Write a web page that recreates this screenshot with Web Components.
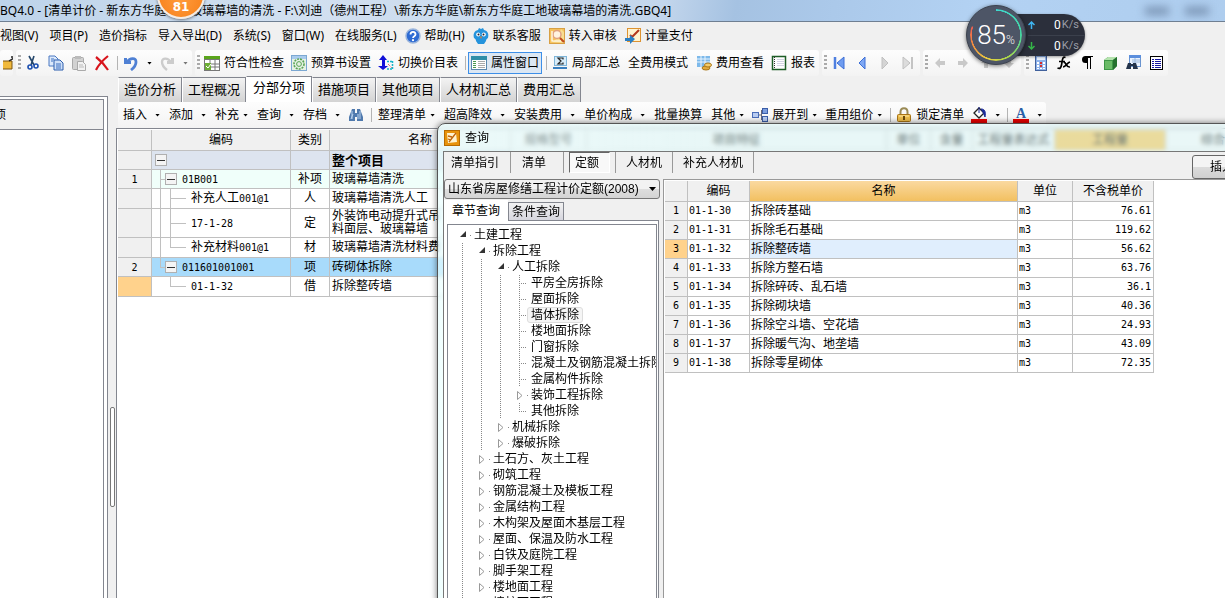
<!DOCTYPE html>
<html lang="zh-CN">
<head>
<meta charset="utf-8">
<title>清单计价</title>
<style>
html,body{margin:0;height:100%;overflow:hidden}
body{font:12px/16px "Noto Sans","Noto Sans CJK SC",sans-serif;color:#000;background:#f0f0f0;--mono:"DejaVu Sans Mono","Noto Sans CJK SC",monospace;--song:"Liberation Sans","Noto Sans CJK SC",sans-serif;--line:#c0c0c0;--edge:#83868f}
</style>
</head>
<body>
<cost-app></cost-app>
<script>
const BASE = `*{box-sizing:border-box}button{font:inherit;color:inherit;background:none;border:0;margin:0;padding:0;white-space:nowrap}`;
function define(name, css, html, init) {
  const t = document.createElement('template');
  t.innerHTML = `<style>${BASE}${css}</style>${html}`;
  customElements.define(name, class extends HTMLElement {
    constructor() {
      super();
      this.attachShadow({ mode: 'open' }).append(t.content.cloneNode(true));
    }
    connectedCallback() {
      if (this.ready) return;
      this.ready = true;
      if (init) init(this.shadowRoot, this);
    }
    fill(markup) {
      const c = document.createElement('template');
      c.innerHTML = markup;
      this.shadowRoot.append(c.content);
    }
  });
}

const ICONS = {
  open: `<path d="M-2 6h11v8h-11z" fill="#f0b93c" stroke="#7a5410"/><path d="M6 6l5-3M8 2h4v4" fill="none" stroke="#222" stroke-width="1.4"/>`,
  cut: `<path d="M4 1l5 9M9 1L6 10" stroke="#24466b" stroke-width="1.6" fill="none"/><circle cx="5" cy="12" r="2" fill="none" stroke="#1c4fb0" stroke-width="1.6"/><circle cx="11" cy="11" r="2" fill="none" stroke="#1c4fb0" stroke-width="1.6"/>`,
  copy: `<path d="M1 1h6l3 3v7H1z" fill="#dce9fb" stroke="#4a78c2"/><path d="M6 5h6l3 3v7H6z" fill="#cfe0f8" stroke="#2d5fae"/><path d="M8 9h5M8 11h5M8 13h5M3 4h3M3 6h2" stroke="#3a6fc0"/>`,
  paste: `<rect x="1.500" y="2.500" width="11" height="12" rx="1" fill="#d2d2d2" stroke="#aaa"/><rect x="4" y="1" width="6" height="3" fill="#bbb"/><path d="M6.500 6.500h5l3 3v6h-8z" fill="#f2f2f2" stroke="#aaa"/><path d="M8 10h4M8 12h5" stroke="#bbb"/>`,
  del: `<path d="M2 2c4 3 8 7 12 13M14 1C9 5 5 9 2 15" stroke="#d8141c" stroke-width="2.200" fill="none"/>`,
  undo: `<path d="M1 3h3v3h4v3H1z" fill="#4f80d4"/><path d="M4 7C7 3 13 2 13 7c0 3-1 5-5 8" stroke="#4f80d4" stroke-width="2.800" fill="none"/>`,
  redo: `<path d="M15 3h-3v3H8v3h7z" fill="#ccc"/><path d="M12 7C9 3 3 2 3 7c0 3 1 5 5 8" stroke="#ccc" stroke-width="2.400" fill="none"/>`,
  check: `<rect x="0" y="1" width="16" height="4" fill="#5aa51c"/><rect x=".5" y="4.500" width="15" height="11" fill="#fff" stroke="#777"/><path d="M6 5v10M11 5v10M1 9h15M1 12h15" stroke="#777"/><rect x="1" y="8" width="6" height="7" fill="#6cae34"/><path d="M2 11l2 2 3-4" stroke="#fff" fill="none"/>`,
  gear: `<rect x=".5" y=".5" width="15" height="15" fill="#e6f1e4" stroke="#7ca8d2"/><rect x="1" y="1" width="14" height="3" fill="#a9cbed"/><circle cx="8" cy="9" r="5" fill="none" stroke="#59a453" stroke-width="1.600" stroke-dasharray="2 1"/><circle cx="8" cy="9" r="2.400" fill="none" stroke="#59a453"/>`,
  swap: `<path d="M5 0L1 5h3v6H0l5 4 5-4H7V5h2z" fill="#1010d8"/><path d="M9 6.500h6M9 14h6M14.500 6v8" stroke="#17b5c9" stroke-width="1.500" stroke-dasharray="2 1"/><path d="M10 9l4 4" stroke="#e03030" stroke-dasharray="1 1"/>`,
  prop: `<rect x=".5" y="1.500" width="15" height="13" fill="#fff" stroke="#5b88ae"/><rect x="0" y="1" width="16" height="4" fill="#2f8ea8"/><path d="M2 6.500h3M2 8.500h3M2 10.500h3M2 12.500h3" stroke="#4b9a50"/><path d="M7 6.500h7M7 8.500h7M7 10.500h7M7 12.500h7" stroke="#aaa"/>`,
  sum: `<rect x="2.500" y="1.500" width="12" height="9" fill="#d7ecf9" stroke="#7fb5d8"/><path d="M11 4.500V3H6l3 3-3 3h5V7.500" stroke="#222" fill="none" stroke-width="1.200"/><path d="M1 13h14" stroke="#3a80c0" stroke-width="2"/>`,
  fee: `<rect x="1" y="1" width="13" height="11" fill="#7db9ea"/><path d="M1 4h13M1 7h13M5 1v11M9 1v11" stroke="#e9f5ff"/><ellipse cx="10" cy="13" rx="4" ry="2" fill="#e2aa3c" stroke="#a87618"/><ellipse cx="12" cy="10" rx="3.500" ry="2" fill="#f4cc6a" stroke="#a87618"/>`,
  report: `<rect x="1.500" y="1.500" width="13" height="13" fill="#fff" stroke="#1d5d26" stroke-width="1.500"/><path d="M3.500 2v12" stroke="#333" stroke-dasharray="1 1"/><path d="M6 4.500h7M6 6.500h7M6 8.500h7M6 10.500h7" stroke="#d4d4e4"/>`,
  first: `<path d="M4 2v12" stroke="#4e7fe0" stroke-width="2.500"/><path d="M13 2v12L6 8z" fill="#6f9cf0" stroke="#3d6fd6"/>`,
  prev: `<path d="M11 2v12L5 8z" fill="#7fa8f4" stroke="#3d6fd6"/>`,
  next: `<path d="M5 2v12l6-6z" fill="#d4d4d4" stroke="#c0c0c0"/>`,
  last: `<path d="M3 2v12l7-6z" fill="#dcdcdc" stroke="#c0c0c0"/><path d="M12 2v12" stroke="#c4c4c4" stroke-width="2"/>`,
  left: `<path d="M3 8l5-5v3h5v4H8v3z" fill="#c9c9c9"/>`,
  right: `<path d="M13 8L8 3v3H3v4h5v3z" fill="#c9c9c9"/>`,
  up: `<path d="M8 3l5 5h-3v5H6V8H3z" fill="#c9c9c9"/>`,
  down: `<path d="M8 13l5-5h-3V3H6v5H3z" fill="#c9c9c9"/>`,
  calc: `<rect x="2.500" y=".5" width="11" height="15" fill="#8fb2ea" stroke="#41619c"/><rect x="4" y="2" width="8" height="3" fill="#e8f2ff"/><path d="M4 7h2v2H4zM4 10h2v2H4zM4 13h2v1H4zM10 7h2v2h-2zM10 10h2v2h-2zM7 13h2v1H7zM10 13h2v1h-2z" fill="#fff"/><path d="M7 7h2v2H7zM7 10h2v2H7z" fill="#d42d2d"/>`,
  fx: `<path d="M9.500 2.500C6 1 6.500 6 5.500 10c-.5 3-1.500 4-4 3M3 6.500h6M7.500 7.500c3-1 2 5 6.500 4.500M14 7c-3 .5-4 5-7 5" stroke="#000" stroke-width="1.700" fill="none"/>`,
  pil: `<path d="M14 1H6.500a3.500 3.500 0 0 0 0 7H8v6h1V3h2v11h1V2h2z" fill="#000"/>`,
  cube: `<path d="M2 5l4-3h9v9l-4 4H2z" fill="#3d9646"/><path d="M2 5l4-3h9l-4 3z" fill="#b5e3ae"/><path d="M11 5l4-3v9l-4 4z" fill="#24702e"/><rect x="3" y="6" width="7" height="8" fill="#6abb67"/>`,
  find: `<rect x="4.500" y=".5" width="11" height="11" fill="#eaf3ff" stroke="#6a94cf"/><rect x="4" y="0" width="12" height="3" fill="#5c8fdd"/><path d="M7 5h8M7 7h8M10 3v8" stroke="#9ab8dd"/><path d="M3 8h3v6H1zM8 8h3l2 6H8zM5 9h4v2H5z" fill="#24344c"/>`,
  list: `<rect x="2.500" y="1.500" width="12" height="13" fill="#fff" stroke="#000"/><path d="M4 4.500h2M4 6.500h2M4 8.500h2M4 10.500h2M4 12.500h2M7 4.500h6M7 6.500h6M7 8.500h6M7 10.500h6M7 12.500h6" stroke="#1818a0"/>`,
  help: `<circle cx="8" cy="8" r="7" fill="#2e6bd3" stroke="#9bb5dc" stroke-width="1.500"/><path d="M5.500 6.500c0-3.500 5-3.500 5 0 0 1.800-2.500 1.800-2.500 3.500" stroke="#fff" stroke-width="1.800" fill="none"/><circle cx="8" cy="12.200" r="1.100" fill="#fff"/>`,
  bird: `<path d="M6 0l2 1 2-1 1 2c4 1 5 4 4 8-1 1-2 1-2 3l-2 3H5l-2-3c0-2-1-2-2-3C0 6 1 3 5 2z" fill="#2593dc"/><circle cx="5.200" cy="6.500" r="2" fill="#fff"/><circle cx="10.800" cy="6.500" r="2" fill="#fff"/><circle cx="5.500" cy="6.500" r="1" fill="#223"/><circle cx="10.500" cy="6.500" r="1" fill="#223"/><path d="M7 8.500h2L8 11z" fill="#ef7d20"/>`,
  audit: `<rect x=".5" y=".5" width="15" height="15" fill="#f6c25c" stroke="#d8a044"/><path d="M1 14c5 0 8-4 11-13l3 3v11z" fill="#f8dc90"/><circle cx="8" cy="6.500" r="4" fill="#fff3e0" stroke="#e0a080" stroke-width="1.500"/><path d="M11 10l4 4" stroke="#c0481b" stroke-width="2"/><path d="M3 3v10h9" stroke="#fff" stroke-width="1.200" fill="none"/>`,
  pay: `<rect x="2.500" y=".5" width="13" height="13" fill="#fff3cf" stroke="#dd9230"/><path d="M5 7l2 2 7-7M4 12l3-4" stroke="#b3371c" stroke-width="2" fill="none"/><path d="M0 10h5V7l5 4-5 5v-3H0z" fill="#2a7fc4"/>`,
  bino: `<path d="M4 2h3v4h2V2h3l3 8v4H9v-4H7v4H1v-4z" fill="#4f79ad"/><path d="M4 4v8M12 4v8M5 7l-2 5M10 7v5" stroke="#b9d2ee"/>`,
  expand: `<rect x="0.500" y="5.500" width="6" height="5" fill="#b9cdf2" stroke="#4b6eb8"/><path d="M7 8h3M9.500 3v10" stroke="#667" fill="none"/><rect x="10.500" y="1.500" width="5" height="5" fill="#7d9ede" stroke="#3b5ea8"/><rect x="10.500" y="9.500" width="5" height="5" fill="#b9cdf2" stroke="#3b5ea8"/>`,
  lock: `<path d="M4.500 8V5c0-5 7-5 7 0v3" stroke="#9a8a55" stroke-width="2" fill="none"/><rect x="1.500" y="7.500" width="13" height="7" rx="1" fill="#edbd4b" stroke="#a97416"/><path d="M3 9h10" stroke="#ffe9a4"/><rect x="7" y="9" width="2" height="4" fill="#6b4a0a"/>`,
  fill: `<path d="M3 6l5-5 5 5-5 5z" fill="#fff" stroke="#222" stroke-width="1.300"/><path d="M8 0v6M10 2c4 0 5 3 4 8l-2-5z" fill="#1c2b9a" stroke="#1c2b9a"/><rect x="0" y="12" width="16" height="4" fill="#e80000"/>`,
  font: `<text x="3" y="11" font-size="14" font-weight="700" font-family="Liberation Serif,serif" fill="#2a5fa8">A</text><rect x="0" y="12" width="16" height="4" fill="#e80000"/>`,
  app: `<rect x=".5" y=".5" width="15" height="15" fill="#e8930c" stroke="#b86b00"/><path d="M3 3h9l1 9-9 1z" fill="#fff3d0"/><path d="M4 6l4 1M4 9l3 1M5 12l7-9" stroke="#c0650a" stroke-width="1.300" fill="none"/>`
};

define('ui-icon', `:host{display:block;width:16px;height:16px;flex:none}svg{display:block;overflow:hidden}`, '', (r, el) => {
  el.fill(`<svg width="16" height="16" viewBox="0 0 16 16" aria-hidden="true">${ICONS[el.getAttribute('name')]}</svg>`);
});

define('tool-button', `
:host{display:block}
button{display:flex;align-items:center;gap:4px;height:22px;padding:0 2px;border:1px solid transparent}
:host([plain]) button{padding:0 3px}
:host([pressed]) button{border-color:#3d8fe8;background:#dce7f3}
i{display:none;width:5px;height:3px;background:#000;clip-path:polygon(0 0,100% 0,50% 100%)}
:host([arrow]) i{display:block}
:host([arrow=wide]) i{margin-left:4px}
:host([muted]) i{background:#777}`,
`<button type="button"><slot name="icon"></slot><slot></slot><i></i></button>`,
(r, el) => { const l = el.getAttribute('label'); if (l) r.querySelector('button').setAttribute('aria-label', l); });

define('tool-sep', `:host{display:block;width:1px;height:14px;background:#b4b4b4;margin:0 1px 0 3px;flex:none}`, '');

define('tool-group', `
:host{display:flex;align-items:center;gap:1px;height:26px;padding:0 1px;border-radius:3px;background:linear-gradient(#fdfdfd,#f3f3f3);flex:none}
:host([grip])::before{content:"";width:3px;height:16px;margin:0 0 0 1px;background:repeating-linear-gradient(#aaa 0 2px,transparent 2px 4px)}`, `<slot></slot>`);

define('title-bar', `
:host{display:flex;align-items:center;height:22px;border-bottom:1px solid #6f7f92;background:linear-gradient(100deg,#bdd3ea,#d2e0f0 25%,#c3d6ec 54%,#a5c2e2 60%,#abc9ea 68%,#b3d2f3 80%,#aecdee);overflow:hidden}
h1{flex:1;margin:0;font-size:12px;font-weight:400;white-space:nowrap}
i{width:24px;height:8px;margin-right:16px;background:#7a94b4;filter:blur(4px)}`,
`<h1>BQ4.0 - [清单计价 - 新东方华庭工地玻璃幕墙的清洗 - F:\\刘迪（德州工程）\\新东方华庭\\新东方华庭工地玻璃幕墙的清洗.GBQ4]</h1><i></i><i></i>`);

define('menu-bar', `
:host{display:block}
nav{display:flex;align-items:center;gap:11px;height:27px}
button{display:flex;align-items:center;gap:4px}
.pic{margin-right:-3px}
.help{margin-left:-3px}`,
`<nav aria-label="主菜单"><button>视图(V)</button><button>项目(P)</button><button>造价指标</button><button>导入导出(D)</button><button>系统(S)</button><button>窗口(W)</button><button>在线服务(L)</button>
<button class="pic help"><ui-icon name="help"></ui-icon>帮助(H)</button><button class="pic"><ui-icon name="bird"></ui-icon>联系客服</button><button class="pic"><ui-icon name="audit"></ui-icon>转入审核</button><button class="pic"><ui-icon name="pay"></ui-icon>计量支付</button></nav>`);

const tb = (icon, text = '', attrs = '') => `<tool-button ${icon ? '' : 'plain'} ${attrs}>${icon ? `<ui-icon slot="icon" name="${icon}"></ui-icon>` : ''}${text}</tool-button>`;
const ib = (icon, label, attrs = '') => tb(icon, '', `label="${label}" ${attrs}`);

define('main-toolbar', `:host{display:flex;gap:3px;height:27px;padding-top:1px}.cut{width:13px;overflow:hidden;padding:0}`,
`<tool-group class="cut">${ib('open', '打开')}</tool-group>
<tool-group grip>${ib('cut', '剪切')}${ib('copy', '复制')}${ib('paste', '粘贴')}${ib('del', '删除')}<tool-sep></tool-sep>${ib('undo', '撤销', 'arrow="wide"')}${ib('redo', '恢复', 'arrow="wide" muted')}</tool-group>
<tool-group grip>${tb('check', '符合性检查')}${tb('gear', '预算书设置')}${tb('swap', '切换价目表')}<tool-sep></tool-sep>${tb('prop', '属性窗口', 'pressed')}<tool-sep></tool-sep>${tb('sum', '局部汇总')}${tb('', '全费用模式')}${tb('fee', '费用查看')}${tb('report', '报表')}</tool-group>
<tool-group grip>${ib('first', '首条')}${ib('prev', '上一条')}${ib('next', '下一条')}${ib('last', '末条')}</tool-group>
<tool-group grip>${ib('left', '左移')}${ib('right', '右移')}${ib('up', '上移')}${ib('down', '下移')}</tool-group>
<tool-group grip>${ib('calc', '计算器')}${ib('fx', '函数')}${ib('pil', '段落')}${ib('cube', '图元')}${ib('find', '查找')}${ib('list', '列表')}</tool-group>`);

define('page-tabs', `
:host{display:flex;align-items:flex-end;height:26px;padding-left:2px;font:13px/16px var(--song)}
button{height:25px;padding:0 5px;border:1px solid var(--edge);border-left-color:#fff;border-bottom:0;background:linear-gradient(#f3f3f3,#d3d3d3)}
button[aria-selected=true]{height:26px;padding:0 6px 3px;background:#fff}`,
`<button role="tab">造价分析</button><button role="tab">工程概况</button><button role="tab" aria-selected="true">分部分项</button><button role="tab">措施项目</button><button role="tab">其他项目</button><button role="tab">人材机汇总</button><button role="tab">费用汇总</button>`);

const W = 'arrow="wide"', T = 'arrow="tight"';
define('edit-toolbar', `:host{display:flex;padding-left:2px}`,
`<tool-group>${tb('', '插入', W)}${tb('', '添加', W)}${tb('', '补充', T)}${tb('', '查询', W)}${tb('', '存档', W)}${ib('bino', '查找')}<tool-sep></tool-sep>${tb('', '整理清单', T)}${tb('', '超高降效', W)}${tb('', '安装费用', W)}${tb('', '单价构成', W)}${tb('', '批量换算')}${tb('', '其他', T)}${tb('expand', '展开到', T)}${tb('', '重用组价', T)}<tool-sep></tool-sep>${tb('lock', '锁定清单')}${ib('fill', '填充颜色', W)}<tool-sep></tool-sep>${ib('font', '字体颜色', W)}</tool-group>`);

define('project-pane', `
:host{display:block;width:108px;flex:none;margin-top:20px;padding:2px 3px 0 0;border:solid var(--edge);border-width:1px 1px 0 0;background:#fff}
section{height:100%;border-top:1px solid var(--edge);border-right:1px solid var(--edge)}
header{height:30px;padding-top:7px;background:#f0f0f0;border-bottom:1px solid var(--edge);overflow:hidden;text-indent:-6px}`,
`<section><header>项</header></section>`);

define('pane-splitter', `:host{display:block;width:8px;flex:none}i{display:block;width:5px;height:100px;margin:331px 0 0 2px;border:1px solid #777;border-radius:2px;background:#fff}`, `<i></i>`);

define('bill-grid', `
:host{display:block;flex:1;border:solid var(--edge);border-width:1px 0 0 1px;padding:1px 0 0 1px;background:#fff;overflow:hidden;font-family:var(--song)}
table{width:1167px;table-layout:fixed;border-collapse:separate;border-spacing:0}
th,td{height:20px;padding:0;border:solid var(--line);border-width:0 1px 1px 0;font-weight:400;text-align:center;line-height:13px;white-space:nowrap;overflow:hidden}
th{background:#f0f0f0}thead th{height:21px}
.s>*{height:19px}.t>*{height:29px}
td:nth-child(4){text-align:left;padding-left:2px}
td:nth-child(2){text-align:left;--v:linear-gradient(var(--line),var(--line))}
td span,tbody th{font:10px/13px var(--mono)}
b{display:inline-block;width:12px;height:12px;margin-right:5px;vertical-align:middle;border:1px solid #b0b0b0;background:linear-gradient(#333,#333) center/8px 1px no-repeat,#f4f4f4}
.root>*{background:#dde4ef}.root td:nth-child(4){font-size:13px;font-weight:700}.root td:nth-child(2){padding-left:3px}
.soft td{background-color:#f0fffa}.sel>td{background-color:#a8dbfb}
.l1 td:nth-child(2){padding-left:13px;background-image:var(--v),var(--v);background-size:1px 100%,5px 1px;background-position:8px 0,8px 50%;background-repeat:no-repeat}
.l1.sel td:nth-child(2){background-size:1px 50%,5px 1px}
.l2 td:nth-child(2){padding-left:39px;background-image:var(--v),var(--v),var(--v);background-size:1px 100%,1px 100%,16px 1px;background-position:8px 0,18px 0,18px 50%;background-repeat:no-repeat}
.l2.end td:nth-child(2){background-size:1px 100%,1px 50%,16px 1px}
.l2.fin td:nth-child(2){background-size:0 0,1px 50%,16px 1px}
.root th{background:#f0f0f0}tr.fin th{background:#ffd28c}
th.gold{background:#f3bf50}`,
`<table><colgroup><col style="width:34px"><col style="width:139px"><col style="width:39px"><col style="width:181px"><col style="width:76px"><col style="width:300px"><col style="width:44px"><col style="width:42px"><col style="width:82px"><col style="width:111px"><col></colgroup>
<thead><tr><th></th><th>编码</th><th>类别</th><th>名称</th><th>规格型号</th><th>项目特征</th><th>单位</th><th>含量</th><th>工程量表达式</th><th class="gold">工程量</th><th>综合单价</th></tr></thead>
<tbody>
<tr class="root s"><th></th><td><b></b></td><td></td><td>整个项目</td></tr>
<tr class="soft l1 s"><th>1</th><td><b></b><span>01B001</span></td><td>补项</td><td>玻璃幕墙清洗</td></tr>
<tr class="l2"><th></th><td>补充人工<span>001@1</span></td><td>人</td><td>玻璃幕墙清洗人工</td></tr>
<tr class="l2 t"><th></th><td><span>17-1-28</span></td><td>定</td><td>外装饰电动提升式吊<br>料面层、玻璃幕墙</td></tr>
<tr class="l2 end"><th></th><td>补充材料<span>001@1</span></td><td>材</td><td>玻璃幕墙清洗材料费</td></tr>
<tr class="sel l1 s"><th>2</th><td><b></b><span>011601001001</span></td><td>项</td><td>砖砌体拆除</td></tr>
<tr class="l2 fin"><th></th><td><span>01-1-32</span></td><td>借</td><td>拆除整砖墙</td></tr>
</tbody></table>`);

const TREE = [
  [0,'土建工程','open'],[1,'拆除工程','open'],[2,'人工拆除','open'],[3,'平房全房拆除'],[3,'屋面拆除'],[3,'墙体拆除','pick'],[3,'楼地面拆除'],[3,'门窗拆除'],[3,'混凝土及钢筋混凝土拆除'],[3,'金属构件拆除'],[3,'装饰工程拆除','shut'],[3,'其他拆除','end'],[2,'机械拆除','shut'],[2,'爆破拆除','shut'],
  ...['土石方、灰土工程','砌筑工程','钢筋混凝土及模板工程','金属结构工程','木构架及屋面木基层工程','屋面、保温及防水工程','白铁及庭院工程','脚手架工程','楼地面工程','墙柱面工程'].map(n => [1,n,'shut'])
];
define('chapter-tree', `
:host{display:block;padding:2px 0 0 7px;overflow:hidden}
ul{list-style:none;margin:0;padding:0}
li{display:flex;height:16px;white-space:nowrap}
i{flex:none;width:19px;position:relative}
.v{background:repeating-linear-gradient(#888 0 1px,transparent 1px 2px) 7px 0/1px 100% no-repeat}
.leaf{background:repeating-linear-gradient(#888 0 1px,transparent 1px 2px) 7px 0/1px 100% no-repeat,repeating-linear-gradient(90deg,#888 0 1px,transparent 1px 2px) 7px 8px/8px 1px no-repeat}
.leaf.end{background-size:1px 8px,8px 1px}
.open,.shut{background:linear-gradient(#888,#888) 15px 8px/1px 1px no-repeat}
svg{position:absolute;left:5px;top:4px}
span{line-height:16px}
.pick span{margin:0 -4px;padding:0 3px;border:1px solid #ddd;border-radius:3px;background:#f5f5f5;line-height:14px}`, '', (r, el) => {
  el.fill('<ul>' + TREE.map(([lv, name, st = '']) => {
    const kind = st === 'open' || st === 'shut' ? st : 'leaf ' + st;
    const mark = st === 'open' ? '<svg width="7" height="7"><path d="M6 0v6H0z" fill="#333"/></svg>' : st === 'shut' ? '<svg width="6" height="9"><path d="M.5 .5v8l4.500-4z" fill="#fff" stroke="#999"/></svg>' : '';
    return `<li class="${st === 'pick' ? 'pick' : ''}">${'<i class="v"></i>'.repeat(lv)}<i class="${kind}">${mark}</i><span>${name}</span></li>`;
  }).join('') + '</ul>');
});

const QUOTA = [['01-1-30','拆除砖基础','76.61'],['01-1-31','拆除毛石基础','119.62'],['01-1-32','拆除整砖墙','56.62'],['01-1-33','拆除方整石墙','63.76'],['01-1-34','拆除碎砖、乱石墙','36.1'],['01-1-35','拆除砌块墙','40.36'],['01-1-36','拆除空斗墙、空花墙','24.93'],['01-1-37','拆除暖气沟、地垄墙','43.09'],['01-1-38','拆除零星砌体','72.35']];
define('quota-table', `
:host{display:block;padding:1px;border:solid #999;border-width:1px 0 0 1px;background:#fff}
table{width:489px;table-layout:fixed;border-collapse:separate;border-spacing:0}
th,td{height:19px;padding:0 2px 0 1px;border:solid var(--line);border-width:0 1px 1px 0;font-weight:400;line-height:14px;text-align:left;white-space:nowrap}
th{background:#f0f0f0;text-align:center;padding:0}thead th{height:21px}
td,tbody th{font-family:var(--mono);font-size:10px}
td:nth-child(3){font:12px/14px var(--song)}
td:last-child{text-align:right}
thead .gold{background:linear-gradient(#fad9a0,#f2c060)}
.on th{background:#ffd28c}.on td:nth-child(3){background:#e0eefd}`, '', (r, el) => {
  el.fill(`<table><colgroup><col style="width:23px"><col style="width:62px"><col style="width:268px"><col style="width:55px"><col style="width:81px"></colgroup><thead><tr><th></th><th>编码</th><th class="gold">名称</th><th>单位</th><th>不含税单价</th></tr></thead><tbody>${QUOTA.map(([c, n, p], i) => `<tr class="${i === 2 ? 'on' : ''}"><th>${i + 1}</th><td>${c}</td><td>${n}</td><td>m3</td><td>${p}</td></tr>`).join('')}</tbody></table>`);
});

define('query-dialog', `
:host{position:absolute;left:437px;top:123px;right:-40px;bottom:-40px;display:flex;flex-direction:column;padding-left:5px;border:1px solid #555;border-radius:8px 0 0 0;background:linear-gradient(90deg,#e8ffffa0,#dcffff70 40%,#e0ffff70);backdrop-filter:blur(2px);box-shadow:0 0 6px #0008;font-family:var(--song);overflow:hidden}
header{display:flex;align-items:center;gap:5px;height:27px;padding-left:1px;flex:none}
h2{margin:0;font-size:12px;font-weight:400}
main{flex:1;min-height:0;display:flex;flex-direction:column;background:#f0f0f0;border:solid #777;border-width:1px 0 0 1px}
nav{display:flex;align-items:flex-start;height:27px;flex:none}
nav button{height:21px;padding:0 10px;border-right:1px solid #999}
nav button:first-child{padding:0 11px 0 7px}
nav .on{margin:0 5px;padding:0 10px 0 5px;border:1px solid;border-color:#666 #fff #fff #666;background:#f8f8f8}
nav .on+button{border-left:1px solid #999}
nav .second{padding:0 17px 0 11px}
nav .insert{height:24px;width:72px;margin:3px 0 0 auto;padding:0 17px;text-align:left;border:1px solid #666;border-radius:3px;background:linear-gradient(#f4f4f4 50%,#dcdcdc 50%,#d0d0d0)}
.split{flex:1;min-height:0;display:grid;grid-template-columns:216px 1fr;gap:3px}
.left{display:flex;flex-direction:column;min-width:0;min-height:0}
.combo{position:relative;height:20px;flex:none}
select{appearance:none;width:100%;height:20px;margin:0;padding:0 3px;border:1px solid #777;border-radius:3px;background:linear-gradient(#f2f2f2 50%,#dedede 50%,#d4d4d4);font:inherit;color:#000}
.combo i{position:absolute;right:4px;top:8px;width:7px;height:4px;background:#000;clip-path:polygon(0 0,100% 0,50% 100%);pointer-events:none}
.tabs{display:flex;align-items:flex-end;height:22px;flex:none;margin-bottom:-1px}
.tabs button{height:19px;padding:0 3px;border:1px solid var(--edge);background:linear-gradient(#f2f2f2,#d6d6de)}
.tabs .on{height:21px;padding:0 7px;background:#fff;border-color:#fff;z-index:1}
.frame{flex:1;min-height:0;margin-right:1px;padding:3px 1px 0 3px;border:solid var(--edge);border-width:1px 1px 0 0;background:#fff}
chapter-tree{height:100%;border:solid var(--edge);border-width:1px 1px 0 1px}`,
`<header><ui-icon name="app"></ui-icon><h2>查询</h2></header>
<main><nav><button>清单指引</button><button class="second">清单</button><button class="on">定额</button><button>人材机</button><button>补充人材机</button><button class="insert">插入</button></nav>
<div class="split"><div class="left"><div class="combo"><select aria-label="定额库"><option>山东省房屋修缮工程计价定额(2008)</option></select><i></i></div>
<div class="tabs"><button class="on">章节查询</button><button>条件查询</button></div><div class="frame"><chapter-tree></chapter-tree></div></div>
<quota-table></quota-table></div></main>`);

define('speed-widget', `
:host{position:absolute;left:966px;top:5px;width:119px;height:60px;font-family:Roboto,sans-serif}
.pill{position:absolute;left:30px;right:0;top:9px;height:42px;border-radius:0 21px 21px 0;background:#2b2f3b;box-shadow:0 1px 3px #0006;padding-left:32px}
.pill p{display:flex;align-items:center;gap:1px;height:21px;margin:0;font-size:12px;color:#fff}
.pill p+p{border-top:1px solid #3b404c}
.pill svg{margin-right:18px}
small{font-size:11px;color:#9a9da6}
.dial{position:absolute;left:0;top:0;width:60px;height:60px;border-radius:50%;background:#4d5566;border:1px solid #3d434f;box-shadow:0 1px 4px #0008;display:flex;align-items:baseline;justify-content:center;color:#fff;font-size:26px;font-weight:300;line-height:58px}
.dial::before{content:"";position:absolute;inset:3px;border-radius:50%;background:conic-gradient(#3fd8d0,#45d5a0 25%,#a8d84a 42%,#e8d040 55%,#f09040 68%,#f06050 80%,transparent 81%);-webkit-mask:radial-gradient(closest-side,transparent 92%,#000 94%)}
.dial small{font-size:12px;color:#eee}`,
`<div class="pill"><p><svg width="7" height="8"><path d="M3.500 8V1M.5 4l3-3 3 3" stroke="#3fb4f0" stroke-width="1.500" fill="none"/></svg>0<small>K/s</small></p><p><svg width="7" height="8"><path d="M3.500 0v7M.5 4l3 3 3-3" stroke="#35b548" stroke-width="1.500" fill="none"/></svg>0<small>K/s</small></p></div><div class="dial">85<small>%</small></div>`);

define('count-badge', `:host{position:absolute;left:157px;top:-29px;width:48px;height:48px;border-radius:50%;border:2px solid #f4ece4;background:radial-gradient(circle at 50% 60%,#ff9a3c,#f47a10);box-shadow:0 1px 3px #0007;box-sizing:border-box;color:#fff;font:700 12px/14px "DejaVu Sans",sans-serif;text-align:center;padding-top:27px}`, `<slot></slot>`);

define('cost-app', `
:host{position:relative;display:flex;flex-direction:column;height:100vh;overflow:hidden}
.work{flex:1;min-height:0;display:flex}
.right{flex:1;min-width:0;display:flex;flex-direction:column}`,
`<title-bar></title-bar><menu-bar></menu-bar><main-toolbar></main-toolbar>
<div class="work"><project-pane></project-pane><pane-splitter></pane-splitter><div class="right"><page-tabs></page-tabs><edit-toolbar></edit-toolbar><bill-grid></bill-grid></div></div>
<query-dialog></query-dialog><count-badge>81</count-badge><speed-widget></speed-widget>`);
</script>
</body>
</html>
